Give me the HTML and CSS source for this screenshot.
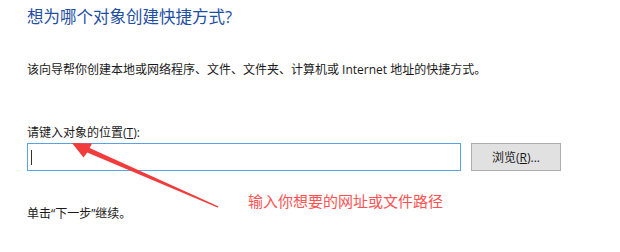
FILE: index.html
```html
<!DOCTYPE html>
<html lang="zh-CN">
<head>
    <meta charset="UTF-8">
    <title>创建快捷方式</title>
    <link rel="stylesheet" href="styles.css">
</head>
<body>

<div class="wizard">
    <h1 class="wizard-title">想为哪个对象创建快捷方式?</h1>

    <p class="wizard-desc">该向导帮你创建本地或网络程序、文件、文件夹、计算机或 Internet 地址的快捷方式。</p>

    <label class="field-label" for="location">请键入对象的位置(<u>T</u>):</label>
    <div class="field-row">
        <div class="text-box" id="location"><span class="caret"></span></div>
        <button class="browse-btn">浏览(<u>R</u>)...</button>
    </div>

    <div class="bottom-row">
        <p class="wizard-next">单击“下一步”继续。</p>
        <p class="note">输入你想要的网址或文件路径</p>
    </div>
</div>

<svg class="arrow" width="620" height="252" viewBox="0 0 620 252">
    <polygon points="72,143 92,143.5 89.6,148 218.6,206.4 217.6,207.6 87.2,152.6 83.5,157.5" fill="#f23b3b"/>
</svg>

</body>
</html>
```

FILE: styles.css
```css
body {
    margin: 0;
    background: #fff;
    font-family: "Open Sans", "Noto Sans CJK SC", sans-serif;
    color: #1a1a1a;
}
.wizard {
    padding: 6px 0 0 27px;
    width: 535px;
}
.wizard-title {
    margin: 0;
    font-size: 16.5px;
    font-weight: normal;
    line-height: 22px;
    color: #1f4fa3;
}
.wizard-desc {
    margin: 34px 0 0;
    font-size: 12px;
    line-height: 16px;
}
.field-label {
    display: block;
    margin-top: 47px;
    font-size: 12px;
    line-height: 16px;
}
.field-row {
    display: flex;
    align-items: center;
    gap: 10px;
    margin-top: 2px;
}
.text-box {
    width: 434px;
    height: 28px;
    border: 1px solid #5aa2e6;
    display: flex;
    align-items: center;
    padding-left: 3px;
    box-sizing: border-box;
}
.caret {
    width: 1px;
    height: 15px;
    background: #333;
}
.browse-btn {
    width: 90px;
    height: 28px;
    background: #e1e1e1;
    border: 1px solid #adadad;
    font-family: "Open Sans", "Noto Sans CJK SC", sans-serif;
    font-size: 12px;
    color: #1a1a1a;
    padding: 0;
}
.bottom-row {
    display: flex;
    align-items: flex-start;
}
.wizard-next {
    margin: 35px 0 0;
    font-size: 12px;
    line-height: 16px;
    width: 221px;
}
.note {
    margin: 20px 0 0;
    font-size: 15px;
    line-height: 20px;
    color: #ff5252;
}
.arrow {
    position: absolute;
    left: 0;
    top: 0;
    pointer-events: none;
}
```
